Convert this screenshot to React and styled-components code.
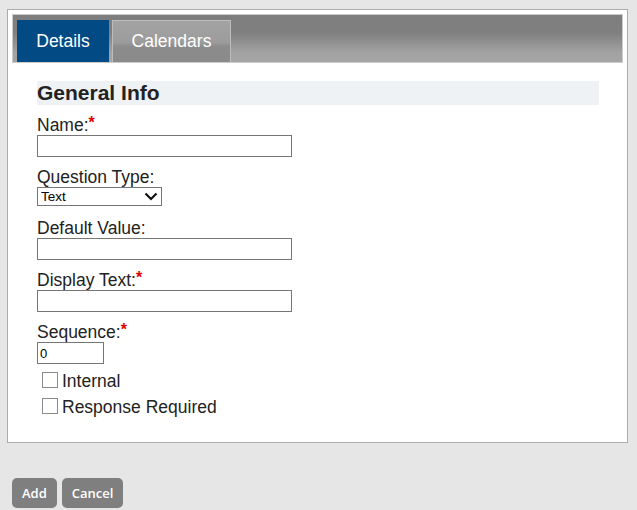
import React from 'react'
import { styled, createGlobalStyle } from 'styled-components'

const GlobalStyle = createGlobalStyle`
    body {
        margin: 0;
        background-color: #e6e6e6;
        font-family: "Liberation Sans", Arial, sans-serif;
        color: #222;
    }
`
const Page = styled.div`
    padding: 9px 9px 0 7px;
`
const Panel = styled.div`
    box-sizing: border-box;
    height: 434px;
    background-color: white;
    border: 1px solid #acacac;
    padding: 4px;
`
const TabBar = styled.div`
    box-sizing: border-box;
    height: 49px;
    display: flex;
    align-items: flex-end;
    gap: 3px;
    padding-left: 4px;
    border: 1px solid #cbcbcb;
    background: linear-gradient(to bottom, #7e7e7e 0%, #808080 38%, #a2a2a2 80%, #a5a5a5 100%);
`
const Tab = styled.div`
    box-sizing: border-box;
    height: 42px;
    width: ${p => p.$width}px;
    display: flex;
    align-items: center;
    justify-content: center;
    font-size: 17.5px;
    color: white;
    background: ${p => p.$active
        ? '#014a84'
        : 'linear-gradient(to bottom, #a3a3a3 0%, #9c9c9c 52%, #8c8c8c 62%, #8a8a8a 100%)'};
    border: ${p => p.$active ? 'none' : '1px solid #bdbdbd'};
    border-bottom: none;
`
const Form = styled.div`
    padding: 18px 24px 0 25px;
`
const SectionTitle = styled.h2`
    margin: 0 0 10px;
    height: 24px;
    line-height: 24px;
    background-color: #eef2f5;
    font-size: 21px;
    font-weight: bold;
    color: #222;
`
const Field = styled.div`
    margin-bottom: ${p => p.$gap ?? 10}px;
`
const Label = styled.label`
    display: block;
    font-size: 17.5px;
    line-height: 20px;
`
const Required = styled.span`
    color: #e00000;
    font-size: 16px;
    font-weight: bold;
    vertical-align: top;
    line-height: 15px;
`
const TextInput = styled.input`
    display: block;
    box-sizing: border-box;
    width: ${p => p.$width}px;
    height: 22px;
    margin: 0;
    padding: 0 2px;
    border: 1px solid #767676;
    font-family: "Liberation Sans", Arial, sans-serif;
    font-size: 13px;
    color: #000;
    background: white;
`
const SelectWrap = styled.div`
    position: relative;
    width: 125px;
`
const Select = styled.select`
    display: block;
    box-sizing: border-box;
    width: 125px;
    height: 19px;
    margin: 0;
    padding: 0 0 0 3px;
    appearance: none;
    border: 1px solid #767676;
    border-radius: 0;
    background: white;
    font-family: "Liberation Sans", Arial, sans-serif;
    font-size: 13.5px;
    color: #000;
`
const Chevron = styled.svg`
    position: absolute;
    right: 4px;
    top: 5px;
    pointer-events: none;
`
const CheckRow = styled.label`
    display: flex;
    align-items: center;
    gap: 4px;
    height: 26px;
    padding-left: 5px;
    font-size: 17.5px;
`
const CheckList = styled.div`
    margin-top: 4px;
`
const Box = styled.span`
    box-sizing: border-box;
    width: 16px;
    height: 16px;
    border: 1px solid #8a8a8a;
    background: white;
    margin-top: -2px;
`
const Actions = styled.div`
    display: flex;
    gap: 5px;
    margin-top: 35px;
    padding-left: 5px;
`
const Button = styled.button`
    height: 30px;
    padding: 0 10px;
    border: none;
    border-radius: 5px;
    background-color: #7f7f7f;
    color: white;
    font-family: "Open Sans", sans-serif;
    font-weight: 600;
    font-size: 13px;
`

const App = () => {
  return (
    <Page>
        <GlobalStyle />
        <Panel>
            <TabBar>
                <Tab $active $width={92}>Details</Tab>
                <Tab $width={119}>Calendars</Tab>
            </TabBar>
            <Form>
                <SectionTitle>General Info</SectionTitle>
                <Field>
                    <Label>Name:<Required>*</Required></Label>
                    <TextInput $width={255} />
                </Field>
                <Field $gap={12}>
                    <Label>Question Type:</Label>
                    <SelectWrap>
                        <Select defaultValue="Text">
                            <option>Text</option>
                        </Select>
                        <Chevron width="14" height="9" viewBox="0 0 14 9">
                            <path d="M1.5 1.5 L7 7 L12.5 1.5" fill="none" stroke="#111" strokeWidth="2.2" />
                        </Chevron>
                    </SelectWrap>
                </Field>
                <Field>
                    <Label>Default Value:</Label>
                    <TextInput $width={255} />
                </Field>
                <Field>
                    <Label>Display Text:<Required>*</Required></Label>
                    <TextInput $width={255} />
                </Field>
                <Field $gap={0}>
                    <Label>Sequence:<Required>*</Required></Label>
                    <TextInput $width={67} defaultValue="0" />
                </Field>
                <CheckList>
                    <CheckRow><Box />Internal</CheckRow>
                    <CheckRow><Box />Response Required</CheckRow>
                </CheckList>
            </Form>
        </Panel>
        <Actions>
            <Button>Add</Button>
            <Button>Cancel</Button>
        </Actions>
    </Page>
  )
}

export default App
